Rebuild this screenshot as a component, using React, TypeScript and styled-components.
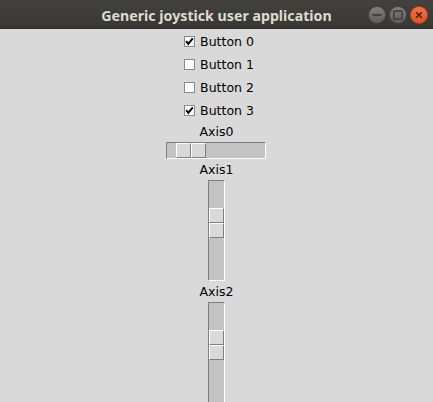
import React from "react";
import styled, { createGlobalStyle } from "styled-components";

const Global = createGlobalStyle`
  html, body { margin: 0; padding: 0; background: #d9d9d9; overflow: hidden; }
  #root { width: 433px; height: 402px; }
`;

const Window = styled.div`
  width: 433px;
  height: 402px;
  display: flex;
  flex-direction: column;
  background: #d9d9d9;
  overflow: hidden;
  font-family: "DejaVu Sans", sans-serif;
  font-size: 12.5px;
  color: #000;
`;

const TitleBar = styled.div`
  height: 28px;
  flex: 0 0 28px;
  display: grid;
  grid-template-columns: 1fr auto 1fr;
  align-items: center;
  background: linear-gradient(#43423e, #383733);
  border-bottom: 1px solid #2e2d29;
`;

const Title = styled.div`
  grid-column: 2;
  font-family: "Noto Sans", "Open Sans", sans-serif;
  font-weight: bold;
  font-size: 14.2px;
  color: #dfdbd2;
  padding-top: 2px;
`;

const Controls = styled.div`
  grid-column: 3;
  justify-self: end;
  display: flex;
  gap: 3px;
  padding-right: 5px;
  padding-top: 2px;
`;

const Content = styled.div`
  display: flex;
  flex-direction: column;
  align-items: center;
  padding-top: 1px;
`;

const CheckRow = styled.div`
  height: 23px;
  display: flex;
  align-items: center;
  gap: 5px;
  padding-left: 5px;
`;

const Label = styled.div`
  height: 19px;
  display: flex;
  align-items: center;
  justify-content: center;
`;

const Trough = styled.div<{ $vertical?: boolean }>`
  box-sizing: border-box;
  display: flex;
  flex-direction: ${(p) => (p.$vertical ? "column" : "row")};
  width: ${(p) => (p.$vertical ? "17px" : "100px")};
  height: ${(p) => (p.$vertical ? "101px" : "17px")};
  background: #c3c3c3;
  border-top: 1px solid #7e7e7e;
  border-left: 1px solid #7e7e7e;
  border-right: 1px solid #ffffff;
  border-bottom: 1px solid #ffffff;
`;

const ScaleWrap = styled.div<{ $vertical?: boolean }>`
  padding: ${(p) => (p.$vertical ? "1px" : "1px 2px 1px 0")};
  display: flex;
`;

const Slider = styled.div<{ $vertical?: boolean; $offset: number }>`
  display: flex;
  flex-direction: ${(p) => (p.$vertical ? "column" : "row")};
  ${(p) => (p.$vertical ? `margin-top: ${p.$offset}px;` : `margin-left: ${p.$offset}px;`)}
  width: ${(p) => (p.$vertical ? "15px" : "30px")};
  height: ${(p) => (p.$vertical ? "30px" : "15px")};
`;

const SliderHalf = styled.div`
  flex: 1;
  box-sizing: border-box;
  background: #d9d9d9;
  border-top: 1px solid #ffffff;
  border-left: 1px solid #ffffff;
  border-right: 1px solid #7e7e7e;
  border-bottom: 1px solid #7e7e7e;
`;

function CheckBox({ checked }: { checked: boolean }) {
  return (
    <svg width="11" height="11" viewBox="0 0 11 11">
      <rect x="0.5" y="0.5" width="10" height="10" fill="#fff" stroke="#8a8a8a" />
      {checked && (
        <path d="M2.2 5.2 L4.3 7.8 L8.8 2.4" fill="none" stroke="#000" strokeWidth="2" />
      )}
    </svg>
  );
}

function WinButton({ kind }: { kind: "min" | "max" | "close" }) {
  const isClose = kind === "close";
  return (
    <svg width="18" height="18" viewBox="0 0 18 18">
      <defs>
        <linearGradient id={`g-${kind}`} x1="0" y1="0" x2="0" y2="1">
          <stop offset="0" stopColor={isClose ? "#f37346" : "#807f7b"} />
          <stop offset="1" stopColor={isClose ? "#e0501c" : "#5e5d59"} />
        </linearGradient>
      </defs>
      <circle cx="9" cy="9" r="8.6" fill={`url(#g-${kind})`} stroke={isClose ? "#a8401a" : "#36352f"} strokeWidth="0.6" />
      {kind === "min" && <rect x="4.5" y="8.2" width="9" height="1.6" fill="#3a3935" />}
      {kind === "max" && <rect x="5" y="5" width="8" height="8" fill="none" stroke="#3a3935" strokeWidth="1.4" />}
      {isClose && (
        <path d="M6.2 6.2 L11.8 11.8 M11.8 6.2 L6.2 11.8" stroke="#3b1a0c" strokeWidth="1.4" />
      )}
    </svg>
  );
}

function HScale({ offset }: { offset: number }) {
  return (
    <ScaleWrap>
      <Trough>
        <Slider $offset={offset}>
          <SliderHalf />
          <SliderHalf />
        </Slider>
      </Trough>
    </ScaleWrap>
  );
}

function VScale({ offset }: { offset: number }) {
  return (
    <ScaleWrap $vertical>
      <Trough $vertical>
        <Slider $vertical $offset={offset}>
          <SliderHalf />
          <SliderHalf />
        </Slider>
      </Trough>
    </ScaleWrap>
  );
}

const buttons = [
  { label: "Button 0", checked: true },
  { label: "Button 1", checked: false },
  { label: "Button 2", checked: false },
  { label: "Button 3", checked: true },
];

export default function App() {
  return (
    <>
      <Global />
      <Window>
        <TitleBar>
          <Title>Generic joystick user application</Title>
          <Controls>
            <WinButton kind="min" />
            <WinButton kind="max" />
            <WinButton kind="close" />
          </Controls>
        </TitleBar>
        <Content>
          {buttons.map((b) => (
            <CheckRow key={b.label}>
              <CheckBox checked={b.checked} />
              <span>{b.label}</span>
            </CheckRow>
          ))}
          <Label>Axis0</Label>
          <HScale offset={9} />
          <Label>Axis1</Label>
          <VScale offset={27} />
          <Label>Axis2</Label>
          <VScale offset={27} />
        </Content>
      </Window>
    </>
  );
}
